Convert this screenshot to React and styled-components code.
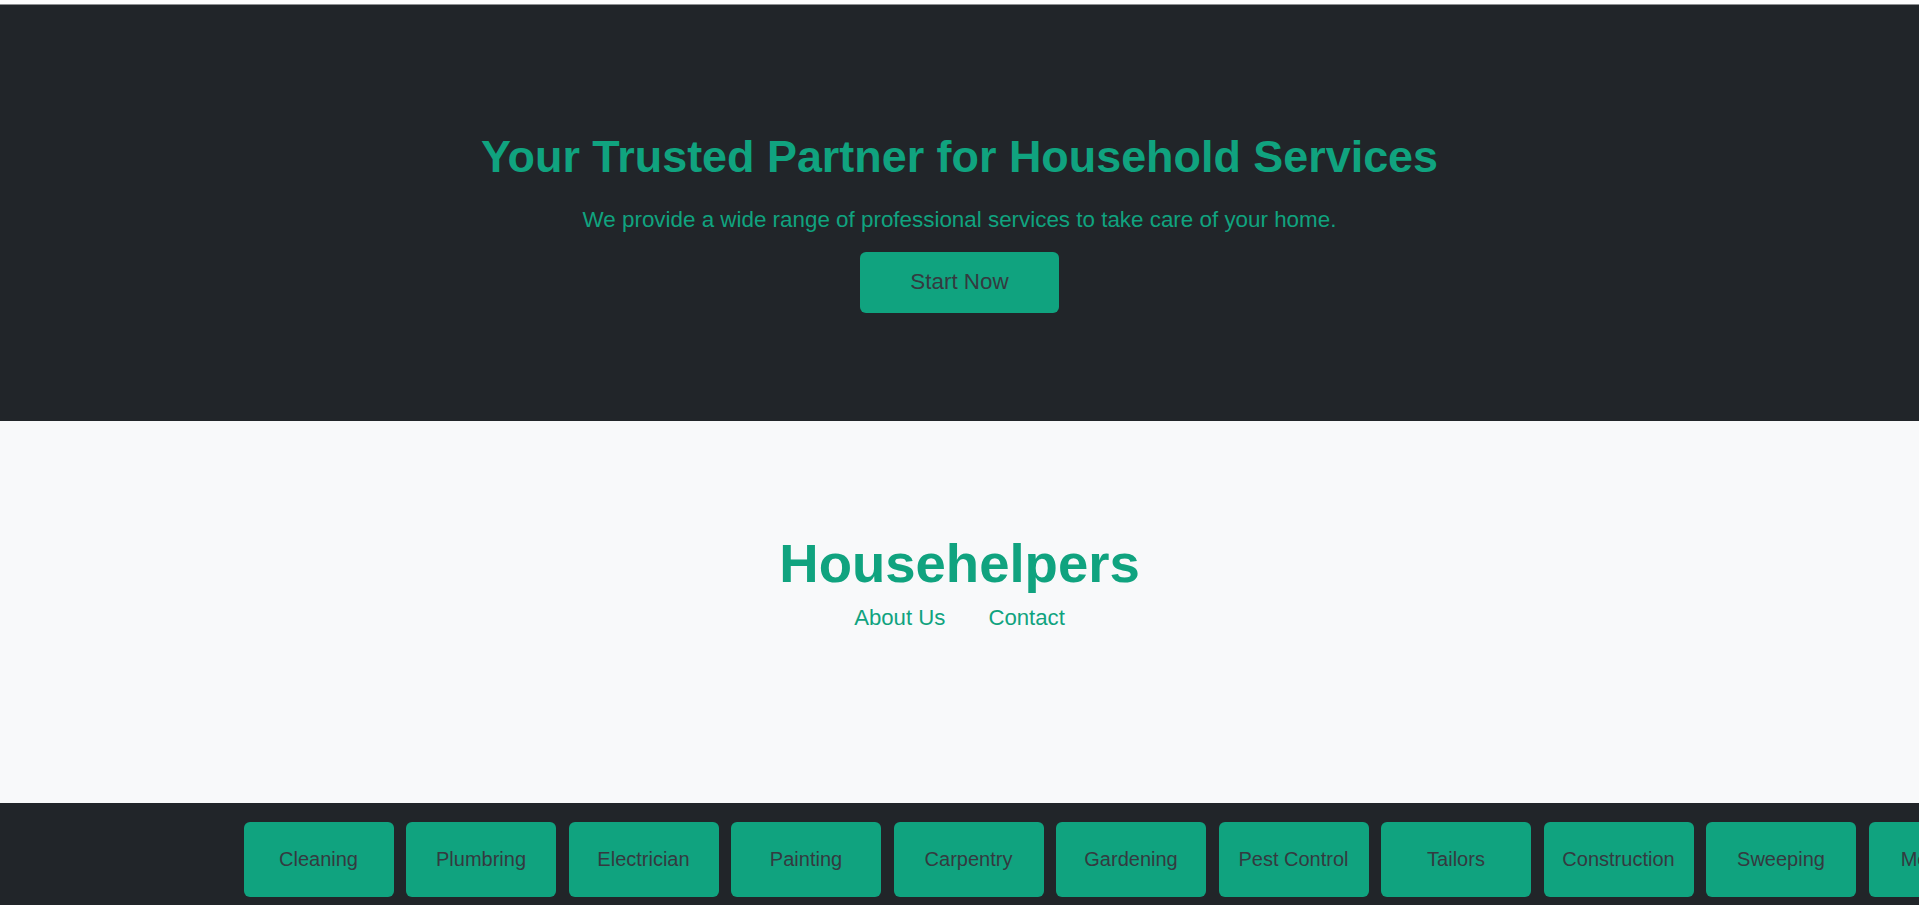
import React from 'react'
import styled, { createGlobalStyle } from 'styled-components'

const services = [
  'Cleaning',
  'Plumbring',
  'Electrician',
  'Painting',
  'Carpentry',
  'Gardening',
  'Pest Control',
  'Tailors',
  'Construction',
  'Sweeping',
  'Mechanic',
  'Moving',
]

function App() {
  return (
    <>
      <GlobalStyle />
      <Page>
        <Hero>
          <HeroTitle>Your Trusted Partner for Household Services</HeroTitle>
          <HeroText>We provide a wide range of professional services to take care of your home.</HeroText>
          <StartButton>Start Now</StartButton>
        </Hero>
        <Brand>
          <BrandName>Househelpers</BrandName>
          <BrandLinks>
            <BrandLink href='#about'>About Us</BrandLink>
            <BrandLink href='#contact'>Contact</BrandLink>
          </BrandLinks>
        </Brand>
        <ServiceBar>
          {services.map((item) => (
            <ServiceButton key={item}>{item}</ServiceButton>
          ))}
        </ServiceBar>
      </Page>
    </>
  )
}

export default App

const GlobalStyle = createGlobalStyle`
  html, body {
    margin: 0;
    padding: 0;
    background: #fdfdfd;
    overflow: hidden;
  }
  body {
    font-family: 'Liberation Sans', Arial, sans-serif;
  }
`

const Page = styled.div`
  padding-top: 4px;
`

const Hero = styled.section`
  background: #212529;
  border-top: 1px solid #8d8f91;
  display: flex;
  flex-direction: column;
  align-items: center;
  padding: 125px 20px 108px;
`

const HeroTitle = styled.h1`
  margin: 0;
  color: #10a37f;
  font-size: 44.9px;
  font-weight: 700;
  line-height: 1.2;
`

const HeroText = styled.p`
  margin: 23px 0 0;
  color: #10a37f;
  font-size: 22.4px;
  line-height: 1.15;
`

const StartButton = styled.button`
  margin-top: 19px;
  height: 61px;
  padding: 0 50px;
  background: #10a37f;
  color: #343a40;
  border: none;
  border-radius: 6px;
  font-family: inherit;
  font-size: 22.4px;
  cursor: pointer;
`

const Brand = styled.section`
  background: #f8f9fa;
  display: flex;
  flex-direction: column;
  align-items: center;
  padding: 110px 20px 171px;
`

const BrandName = styled.h2`
  margin: 0;
  color: #10a37f;
  font-size: 54.5px;
  font-weight: 700;
  line-height: 1.2;
`

const BrandLinks = styled.nav`
  display: flex;
  gap: 43px;
  margin-top: 9px;
`

const BrandLink = styled.a`
  color: #10a37f;
  font-size: 22.2px;
  line-height: 1.2;
  text-decoration: none;
`

const ServiceBar = styled.nav`
  background: #212529;
  display: flex;
  gap: 12.5px;
  padding: 19px 0 18px 243.5px;
  overflow: hidden;
`

const ServiceButton = styled.button`
  flex: 0 0 150px;
  height: 75px;
  background: #10a37f;
  color: #343a40;
  border: none;
  border-radius: 6px;
  font-family: inherit;
  font-size: 20px;
  cursor: pointer;
`
